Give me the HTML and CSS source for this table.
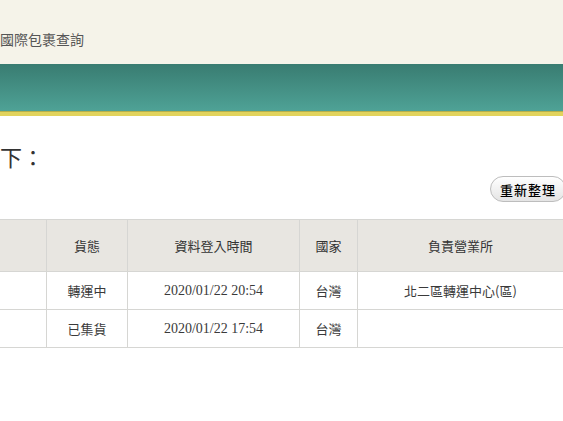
FILE: index.html
```html
<!DOCTYPE html>
<html lang="zh-Hant">
<head>
  <meta charset="UTF-8">
  <title>國際包裹查詢</title>
  <link rel="stylesheet" href="styles.css">
</head>
<body>

  <div class="top-bar">
    <span class="crumb">國際包裹查詢</span>
  </div>
  <div class="nav-bar"></div>

  <div class="content">
    <h2 class="result-title">下：</h2>

    <div class="tools">
      <button class="btn-refresh">重新整理</button>
    </div>

    <table class="track-table">
      <thead>
        <tr>
          <th class="col-first"></th>
          <th class="col-status">貨態</th>
          <th class="col-time">資料登入時間</th>
          <th class="col-country">國家</th>
          <th class="col-office">負責營業所</th>
        </tr>
      </thead>
      <tbody>
        <tr>
          <td class="col-first"></td>
          <td>轉運中</td>
          <td class="date">2020/01/22 20:54</td>
          <td>台灣</td>
          <td>北二區轉運中心(區)</td>
        </tr>
        <tr>
          <td class="col-first"></td>
          <td>已集貨</td>
          <td class="date">2020/01/22 17:54</td>
          <td>台灣</td>
          <td></td>
        </tr>
      </tbody>
    </table>
  </div>

</body>
</html>
```

FILE: styles.css
```css
body, html {
  margin: 0;
  padding: 0;
  font-family: 'Noto Sans CJK TC', 'Noto Sans', sans-serif;
  background-color: #fff;
  color: #333;
  overflow: hidden;
}

.top-bar {
  height: 64px;
  background-color: #f5f3e9;
  display: flex;
  align-items: center;
}

.crumb {
  font-size: 14px;
  color: #555;
  margin-top: 13px;
}

.nav-bar {
  height: 48px;
  background: linear-gradient(to bottom, #397c71, #4fa397);
  border-bottom: 4px solid #e2d35c;
  box-shadow: inset 0 -1px 0 #b7b04a;
}

.content {
  padding-top: 25px;
}

.result-title {
  margin: 0;
  font-size: 22px;
  font-weight: normal;
  line-height: 30px;
  color: #333;
}

.tools {
  display: flex;
  justify-content: flex-end;
  margin-top: 5px;
}

.btn-refresh {
  height: 26px;
  width: 76px;
  margin-right: -3px;
  border-radius: 13px;
  border: 1px solid #bdbdbd;
  background: linear-gradient(to bottom, #ffffff, #e4e4e4);
  font-family: 'Noto Sans CJK TC', sans-serif;
  font-size: 13px;
  font-weight: 500;
  color: #000;
  letter-spacing: 1px;
  padding: 0;
}

.track-table {
  margin-top: 17px;
  width: 563px;
  border-collapse: collapse;
  font-size: 13px;
}

.track-table th,
.track-table td {
  border: 1px solid #d6d6d3;
  text-align: center;
  padding: 0;
}

.track-table th {
  height: 51px;
  background-color: #e8e6e1;
  font-weight: normal;
  color: #333;
}

.track-table td {
  height: 37px;
  color: #3a3a3a;
}

.track-table .col-first {
  width: 46px;
  border-left: none;
}

.track-table .col-status {
  width: 80px;
}

.track-table .col-time {
  width: 171px;
}

.track-table .col-country {
  width: 57px;
}

.track-table .col-office {
  border-right: none;
}

.track-table td:last-child {
  border-right: none;
}

.date {
  font-family: 'Liberation Serif', serif;
  font-size: 14px;
}
```
